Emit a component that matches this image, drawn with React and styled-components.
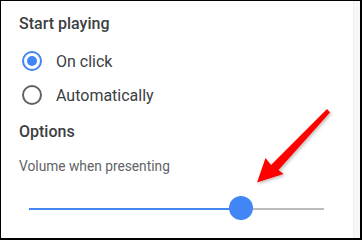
import React from "react";
import styled, { createGlobalStyle } from "styled-components";

const Global = createGlobalStyle`
  html, body { margin: 0; padding: 0; background: #fff; }
  body { font-family: Roboto, "Noto Sans", Arial, sans-serif; }
`;

const Frame = styled.div`
  position: relative;
  width: 362px;
  height: 240px;
  box-sizing: border-box;
  border-style: solid;
  border-color: #000;
  border-width: 1px 2px 2px 1px;
  display: flex;
  background: #fff;
  overflow: hidden;
`;

const Content = styled.div`
  flex: 1;
  padding: 13px 0 0 18px;
  display: flex;
  flex-direction: column;
`;

const ScrollStrip = styled.div`
  width: 6px;
  background: #f6f7f9;
  border-left: 1px solid #eef0f2;
`;

const Heading = styled.div`
  font-size: 16px;
  line-height: 20px;
  font-weight: 500;
  color: #3c4043;
  margin-top: ${(p) => p.$mt || 0}px;
`;

const RadioGroup = styled.div`
  display: flex;
  flex-direction: column;
  margin-top: 10px;
`;

const RadioRow = styled.label`
  height: 34px;
  display: flex;
  align-items: center;
  padding-left: 3px;
  gap: 14px;
  font-size: 16px;
  color: #3c4043;
`;

const RadioCircle = styled.span`
  width: 20px;
  height: 20px;
  box-sizing: border-box;
  border-radius: 50%;
  border: 2px solid ${(p) => (p.$checked ? "#4285f4" : "#5f6368")};
  display: flex;
  align-items: center;
  justify-content: center;
  &::after {
    content: "";
    width: 10px;
    height: 10px;
    border-radius: 50%;
    background: #4285f4;
    display: ${(p) => (p.$checked ? "block" : "none")};
  }
`;

const SubLabel = styled.div`
  margin-top: 14px;
  font-size: 13.75px;
  line-height: 20px;
  color: #5f6368;
`;

const Slider = styled.div`
  position: relative;
  margin: 20px 0 0 10px;
  width: 295px;
  height: 24px;
  display: flex;
  align-items: center;
`;

const Track = styled.div`
  position: relative;
  width: 100%;
  height: 2px;
  margin-top: 2px;
  background: #bdbdbd;
`;

const Fill = styled.div`
  height: 100%;
  background: #4285f4;
`;

const Thumb = styled.div`
  position: absolute;
  top: 0;
  width: 24px;
  height: 24px;
  margin-left: -12px;
  border-radius: 50%;
  background: #4285f4;
`;

const Arrow = styled.svg`
  position: absolute;
  left: 0;
  top: 0;
  width: 362px;
  height: 240px;
  pointer-events: none;
  overflow: visible;
`;

export default function App() {
  const value = 71.9;
  return (
    <>
      <Global />
      <Frame>
        <Content>
          <Heading>Start playing</Heading>
          <RadioGroup>
            <RadioRow>
              <RadioCircle $checked />
              On click
            </RadioRow>
            <RadioRow>
              <RadioCircle />
              Automatically
            </RadioRow>
          </RadioGroup>
          <Heading $mt={10}>Options</Heading>
          <SubLabel>Volume when presenting</SubLabel>
          <Slider>
            <Track>
              <Fill style={{ width: `${value}%` }} />
            </Track>
            <Thumb style={{ left: `${value}%` }} />
          </Slider>
        </Content>
        <ScrollStrip />
        <Arrow viewBox="0 0 362 240">
          <defs>
            <filter id="sh" x="-20%" y="-20%" width="140%" height="140%">
              <feDropShadow dx="1.5" dy="1.5" stdDeviation="1.5" floodColor="#000" floodOpacity="0.25" />
            </filter>
          </defs>
          <polygon
            transform="translate(-1,-1)"
            points="327,109 330,112.5 278.5,170 283.5,174 257,182.5 265.5,158 271,165"
            fill="#ff0000"
            filter="url(#sh)"
          />
        </Arrow>
      </Frame>
    </>
  );
}
